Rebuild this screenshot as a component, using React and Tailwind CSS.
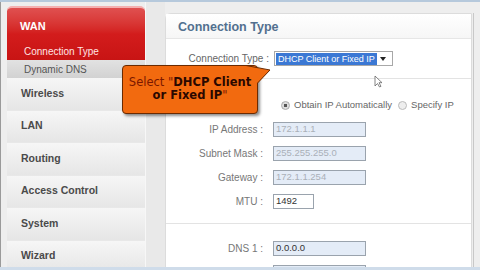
import React from 'react';

const menu = ['Wireless', 'LAN', 'Routing', 'Access Control', 'System', 'Wizard'];

function Field({ label, value, width = 'w-[93px]', filled = true, dim = true }) {
  return (
    <div className="flex h-[24px] shrink-0 items-center">
      <div className="w-[101px] pr-[4px] text-right text-[10px] text-[#777]">{label} :</div>
      <div
        className={`ml-[6px] flex h-[15px] ${width} items-center border border-[#9aa3ad] px-[2px] text-[9.5px] ${
          filled ? 'bg-[#e4ecf7]' : 'bg-white'
        } ${dim ? 'text-[#aab0b8]' : 'text-[#333]'}`}
      >
        {value}
      </div>
    </div>
  );
}

export default function App() {
  return (
    <div
      className="relative flex h-[270px] w-[480px] items-start overflow-hidden border-t-2 border-b-[3px] border-t-[#b6c9dc] border-b-[#cfdcea] bg-[#eeeeee]"
      style={{ fontFamily: '"Liberation Sans", Arial, sans-serif' }}
    >
      {/* sidebar */}
      <div className="flex h-full w-[145px] shrink-0 flex-col border-l border-[#9a9a9a] pl-[6px] pt-[4px]">
        <div className="flex h-[54px] shrink-0 flex-col rounded-t-[5px] border-t-2 border-[#f4b0b0] bg-gradient-to-b from-[#e05050] via-[#d31c1c] to-[#c81414] pl-[13px]">
          <div className="pt-[12px] text-[11px] font-bold leading-[12px] text-white">WAN</div>
          <div className="pt-[14px] pl-[4px] text-[10px] leading-[12px] text-[#ffe4e4]">Connection Type</div>
        </div>
        <div className="flex h-[18px] shrink-0 items-center bg-gradient-to-b from-[#e2e2e2] to-[#d2d2d2] pl-[17px] text-[10px] text-[#555]">
          Dynamic DNS
        </div>
        {menu.map((m) => (
          <div
            key={m}
            className="flex h-[32.5px] shrink-0 items-center border-b border-[#e8e8e8] bg-gradient-to-b from-[#f6f6f6] to-[#e6e6e6] pl-[14px] text-[10.5px] font-bold text-[#4a4a4a]"
          >
            {m}
          </div>
        ))}
      </div>

      {/* gutter */}
      <div className="h-full w-[20px] shrink-0 border-l border-[#f7f7f7] bg-[#e9e9e9]" />

      {/* content panel */}
      <div className="mt-[11px] flex w-[307px] shrink-0 flex-col rounded-tl-[6px] border border-[#dcdcdc] bg-white">
        <div className="flex h-[25px] shrink-0 items-end border-b border-[#e6e6e6] bg-gradient-to-b from-white to-[#f6f6f6] pb-[4px] pl-[12px] text-[12.5px] font-bold leading-[14px] text-[#52708f]">
          Connection Type
        </div>
        <div className="flex h-[40px] shrink-0 items-center border-b border-[#e3e3e3]">
          <div className="w-[103px] text-right text-[10px] text-[#666]">Connection Type :</div>
          <div className="ml-[5px] flex h-[15px] w-[119px] items-center border border-[#a8a8a8] bg-white pl-[1px]">
            <span className="whitespace-nowrap bg-[#3b78d4] px-[2px] text-[9px] leading-[12px] text-white">DHCP Client or Fixed IP</span>
            <svg width="6" height="4" viewBox="0 0 6 4" className="ml-[3px]">
              <path d="M0 0h6L3 4z" fill="#222" />
            </svg>
          </div>
        </div>
        <div className="flex shrink-0 flex-col border-b border-[#e3e3e3] pb-[10px] pt-[14px]">
          <div className="flex h-[24px] items-center pl-[115px] text-[9.5px] text-[#666]">
            <span className="inline-block h-[9px] w-[9px] rounded-full border border-[#aaa] bg-[radial-gradient(circle,#555_35%,#ddd_40%)]" />
            <span className="ml-[4px]">Obtain IP Automatically</span>
            <span className="ml-[6px] inline-block h-[9px] w-[9px] rounded-full border border-[#bbb] bg-[#eee]" />
            <span className="ml-[4px]">Specify IP</span>
          </div>
          <Field label="IP Address" value="172.1.1.1" />
          <Field label="Subnet Mask" value="255.255.255.0" />
          <Field label="Gateway" value="172.1.1.254" />
          <Field label="MTU" value="1492" width="w-[41px]" filled={false} dim={false} />
        </div>
        <div className="flex shrink-0 flex-col pt-[12px]">
          <Field label="DNS 1" value="0.0.0.0" dim={false} />
          <Field label="DNS 2" value="0.0.0.0" dim={false} />
        </div>
      </div>

      <div className="ml-[1px] mt-[11px] h-full w-[1px] shrink-0 bg-[#c8c8c8]" />

      {/* callout */}
      <div className="absolute left-[122px] top-[63px] h-[49px] w-[136px]">
        <div
          className="flex h-full w-full flex-col items-center justify-center rounded-[4px] border border-[#6b2a00] bg-[#f26a0f] pb-[2px] text-[11.5px] leading-[13px] text-[#7a1800] shadow-[2px_2px_3px_rgba(0,0,0,0.45)]"
          style={{ fontFamily: '"DejaVu Sans", Verdana, sans-serif' }}
        >
          <div className="whitespace-nowrap">
            Select "<b className="text-[#2a0800]">DHCP Client</b>
          </div>
          <div className="whitespace-nowrap">
            <b className="text-[#2a0800]">or Fixed IP</b>"
          </div>
        </div>
        <svg className="absolute left-0 top-0 overflow-visible" width="150" height="20" viewBox="0 0 150 20">
          <path d="M124 1L148 5L136 18L133 18L133 1z" fill="#f26a0f" />
          <path d="M124 0.5L148 5L135.5 18" fill="none" stroke="#6b2a00" strokeWidth="1" />
        </svg>
      </div>

      {/* cursor */}
      <svg className="absolute left-[374px] top-[73px]" width="9" height="13" viewBox="0 0 9 13">
        <path d="M1 1v10l2.5-2.5L5.5 12l1.5-.7-2-3.6H8z" fill="#fff" stroke="#666" strokeWidth="0.8" />
      </svg>
    </div>
  );
}
